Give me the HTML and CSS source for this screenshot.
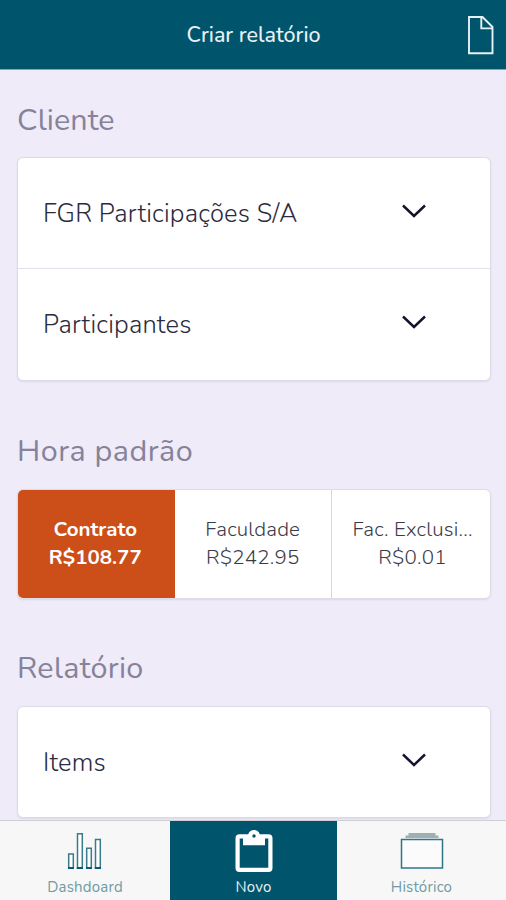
FILE: index.html
```html
<!DOCTYPE html>
<html lang="pt-BR">
<head>
    <meta charset="UTF-8">
    <meta name="viewport" content="width=device-width, initial-scale=1.0">
    <title>Criar relatório</title>
    <link rel="stylesheet" href="styles.css">
</head>
<body>
    <header class="header">
        <h1 class="header-title">Criar relatório</h1>
        <svg class="header-icon" width="28" height="40" viewBox="0 0 28 40">
            <path d="M2 2h13.500L25.500 12v26.200H2z M14.300 2v11.400H25.500" fill="none" stroke="#e6f2f6" stroke-width="1.900"/>
        </svg>
    </header>

    <main class="content">
        <h2>Cliente</h2>
        <div class="card">
            <div class="row">
                <span>FGR Participações S/A</span>
                <svg class="chevron" width="26" height="16" viewBox="0 0 26 16"><path d="M2 2.500L13 13 24 2.500"/></svg>
            </div>
            <div class="row">
                <span>Participantes</span>
                <svg class="chevron" width="26" height="16" viewBox="0 0 26 16"><path d="M2 2.500L13 13 24 2.500"/></svg>
            </div>
        </div>

        <h2 class="hora-title">Hora padrão</h2>
        <div class="card rates">
            <div class="rate active">
                <span>Contrato</span>
                <span>R$108.77</span>
            </div>
            <div class="rate">
                <span>Faculdade</span>
                <span>R$242.95</span>
            </div>
            <div class="rate">
                <span>Fac. Exclusi...</span>
                <span>R$0.01</span>
            </div>
        </div>

        <h2 class="relatorio-title">Relatório</h2>
        <div class="card">
            <div class="row">
                <span>Items</span>
                <svg class="chevron" width="26" height="16" viewBox="0 0 26 16"><path d="M2 2.500L13 13 24 2.500"/></svg>
            </div>
        </div>
    </main>

    <nav class="tabs">
        <div class="tab">
            <svg width="44" height="44" viewBox="0 0 44 44">
                <g fill="#fff" stroke="#397b89" stroke-width="1.500">
                    <path d="M5.700 24h4.600v14H5.700zM14.500 3.800h4.800V38h-4.800zM23.700 18.300h4.600V38h-4.600zM32.500 9.500h4.800V38h-4.800z"/>
                </g>
                <path d="M5 38h6M13.800 38H20M23 38h6M31.800 38H38" stroke="#0a5a70" stroke-width="2"/>
            </svg>
            <span>Dashdoard</span>
        </div>
        <div class="tab active">
            <svg width="44" height="44" viewBox="0 0 44 44">
                <path d="M7.500 4.200h8.700C17.300 1.200 19.300 0 22 0s4.700 1.200 5.800 4.200h8.700a4 4 0 0 1 4 4V38a4 4 0 0 1-4 4h-29a4 4 0 0 1-4-4V8.200a4 4 0 0 1 4-4zM7.700 8.400v29.400h28.600V8.400H33v6.800H11V8.400z" fill="#fff" fill-rule="evenodd"/>
                <circle cx="22" cy="6" r="1.700" fill="#00546b"/>
            </svg>
            <span>Novo</span>
        </div>
        <div class="tab">
            <svg width="44" height="44" viewBox="0 0 44 44">
                <path d="M8.500 3h27v2.500h3V8H5.500V5.500h3z" fill="#9eb0b6"/>
                <path d="M1.500 9.500h41v28.500h-41z" fill="#fbfbfb" stroke="#2f7686" stroke-width="1.500"/>
            </svg>
            <span>Histórico</span>
        </div>
    </nav>
</body>
</html>
```
FILE: styles.css
```css
* {
    box-sizing: border-box;
}

body {
    margin: 0;
    height: 900px;
    overflow: hidden;
    display: flex;
    flex-direction: column;
    font-family: Nunito, Lato, sans-serif;
    background-color: #efebf9;
    color: #2c2a3e;
}

/* Top bar */
.header {
    height: 70px;
    flex: none;
    display: grid;
    grid-template-columns: 1fr auto 1fr;
    align-items: center;
    padding: 0 11px 0 12px;
    background-color: #00546b;
    border-bottom: 1px solid #8f9fb9;
}

.header-title {
    grid-column: 2;
    margin: 0;
    font-size: 21.5px;
    font-weight: 500;
    line-height: 30px;
    color: #e6f2f6;
}

.header-icon {
    justify-self: end;
}

/* Sections */
.content {
    flex: 1;
    min-height: 0;
    padding: 0 15px 0 17px;
    overflow: hidden;
}

h2 {
    margin: 0;
    font-size: 30.5px;
    font-weight: 400;
    line-height: 40px;
    letter-spacing: 0.1px;
    color: #85829a;
    padding: 30px 0 17px;
}

.hora-title {
    padding: 50px 0 18px;
    letter-spacing: 0.5px;
}

.relatorio-title {
    padding: 49px 0 18px;
    letter-spacing: 0.3px;
}

.card {
    background: #fff;
    border: 1px solid #dedbe7;
    border-radius: 6px;
    box-shadow: 0 1px 2px rgba(60, 50, 90, 0.1);
    overflow: hidden;
}

.row {
    height: 110px;
    display: flex;
    align-items: center;
    justify-content: space-between;
    padding: 1px 63px 0 25px;
    font-size: 25.5px;
    font-weight: 300;
    letter-spacing: 0.2px;
}

.row + .row {
    height: 112px;
    padding-top: 0;
    border-top: 1px solid #e2e0e8;
}

.chevron {
    margin-bottom: 5px;
    fill: none;
    stroke: #17132f;
    stroke-width: 2.5;
}

/* Hourly rates */
.rates {
    display: grid;
    grid-template-columns: 156.5px 156.5px 1fr;
}

.rate {
    height: 108px;
    display: flex;
    flex-direction: column;
    align-items: center;
    justify-content: center;
    padding-bottom: 2px;
    font-size: 20.5px;
    font-weight: 300;
    line-height: 28px;
    letter-spacing: 0.2px;
    color: #3c3a48;
}

.rate + .rate + .rate {
    padding-left: 3px;
    border-left: 1px solid #d8d6df;
}

.rate.active {
    padding-right: 2px;
    background: #cc4e19;
    color: #fff;
    font-weight: 700;
    letter-spacing: 0;
}

/* Bottom tabs */
.tabs {
    height: 80px;
    flex: none;
    display: grid;
    grid-template-columns: 170px 167px 1fr;
    background: #f7f7f8;
    border-top: 1px solid #d0ced5;
}

.tab {
    display: flex;
    flex-direction: column;
    align-items: center;
    padding-top: 9px;
    font-size: 15px;
    font-weight: 400;
    line-height: 20px;
    letter-spacing: 0.2px;
    color: #709ba3;
}

.tab span {
    margin-top: 3px;
}

.tab.active {
    background: #00546b;
    color: #e6f2f6;
}
```
